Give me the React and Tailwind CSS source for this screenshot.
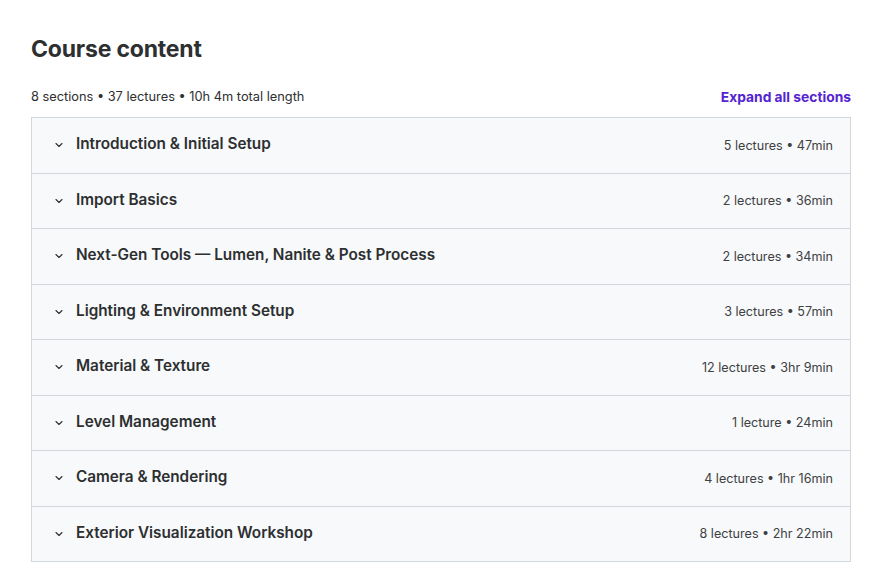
const SECTIONS = [
  { title: 'Introduction & Initial Setup', meta: '5 lectures • 47min' },
  { title: 'Import Basics', meta: '2 lectures • 36min' },
  { title: 'Next-Gen Tools — Lumen, Nanite & Post Process', meta: '2 lectures • 34min' },
  { title: 'Lighting & Environment Setup', meta: '3 lectures • 57min' },
  { title: 'Material & Texture', meta: '12 lectures • 3hr 9min' },
  { title: 'Level Management', meta: '1 lecture • 24min' },
  { title: 'Camera & Rendering', meta: '4 lectures • 1hr 16min' },
  { title: 'Exterior Visualization Workshop', meta: '8 lectures • 2hr 22min' },
]

function Chevron() {
  return (
    <svg width="12" height="12" viewBox="0 0 24 24" fill="none" stroke="#2d2f31" strokeWidth="2.2" strokeLinecap="round" strokeLinejoin="round">
      <path d="M6 9l6 6 6-6" />
    </svg>
  )
}

export default function App() {
  return (
    <div className="w-[878px] h-[575px] bg-white text-[#2d2f31] font-['Inter',sans-serif] overflow-hidden">
      <div className="pl-[31px] pr-[27px] pt-[34px]">
        <h2 className="text-[23px] leading-[30px] font-bold tracking-[-0.2px]">Course content</h2>
        <div className="flex items-end justify-between mt-[24px] pb-[11px]">
          <span className="text-[12.8px] leading-[18px]">8 sections • 37 lectures • 10h 4m total length</span>
          <button className="text-[13.8px] leading-[18px] font-bold text-[#5624d0]">Expand all sections</button>
        </div>
        <div className="border border-[#d1d7dc] border-b-0">
          {SECTIONS.map(s => (
            <div key={s.title} className="h-[55.5px] bg-[#f7f9fa] border-b border-[#d1d7dc] flex items-center pl-[21px] pr-[17px]">
              <Chevron />
              <span className="ml-[11px] flex-1 text-[15.3px] font-semibold leading-5 -mt-[2px]">{s.title}</span>
              <span className="text-[12.6px] leading-5 mt-[1px] text-[#3e4143]">{s.meta}</span>
            </div>
          ))}
        </div>
      </div>
    </div>
  )
}
